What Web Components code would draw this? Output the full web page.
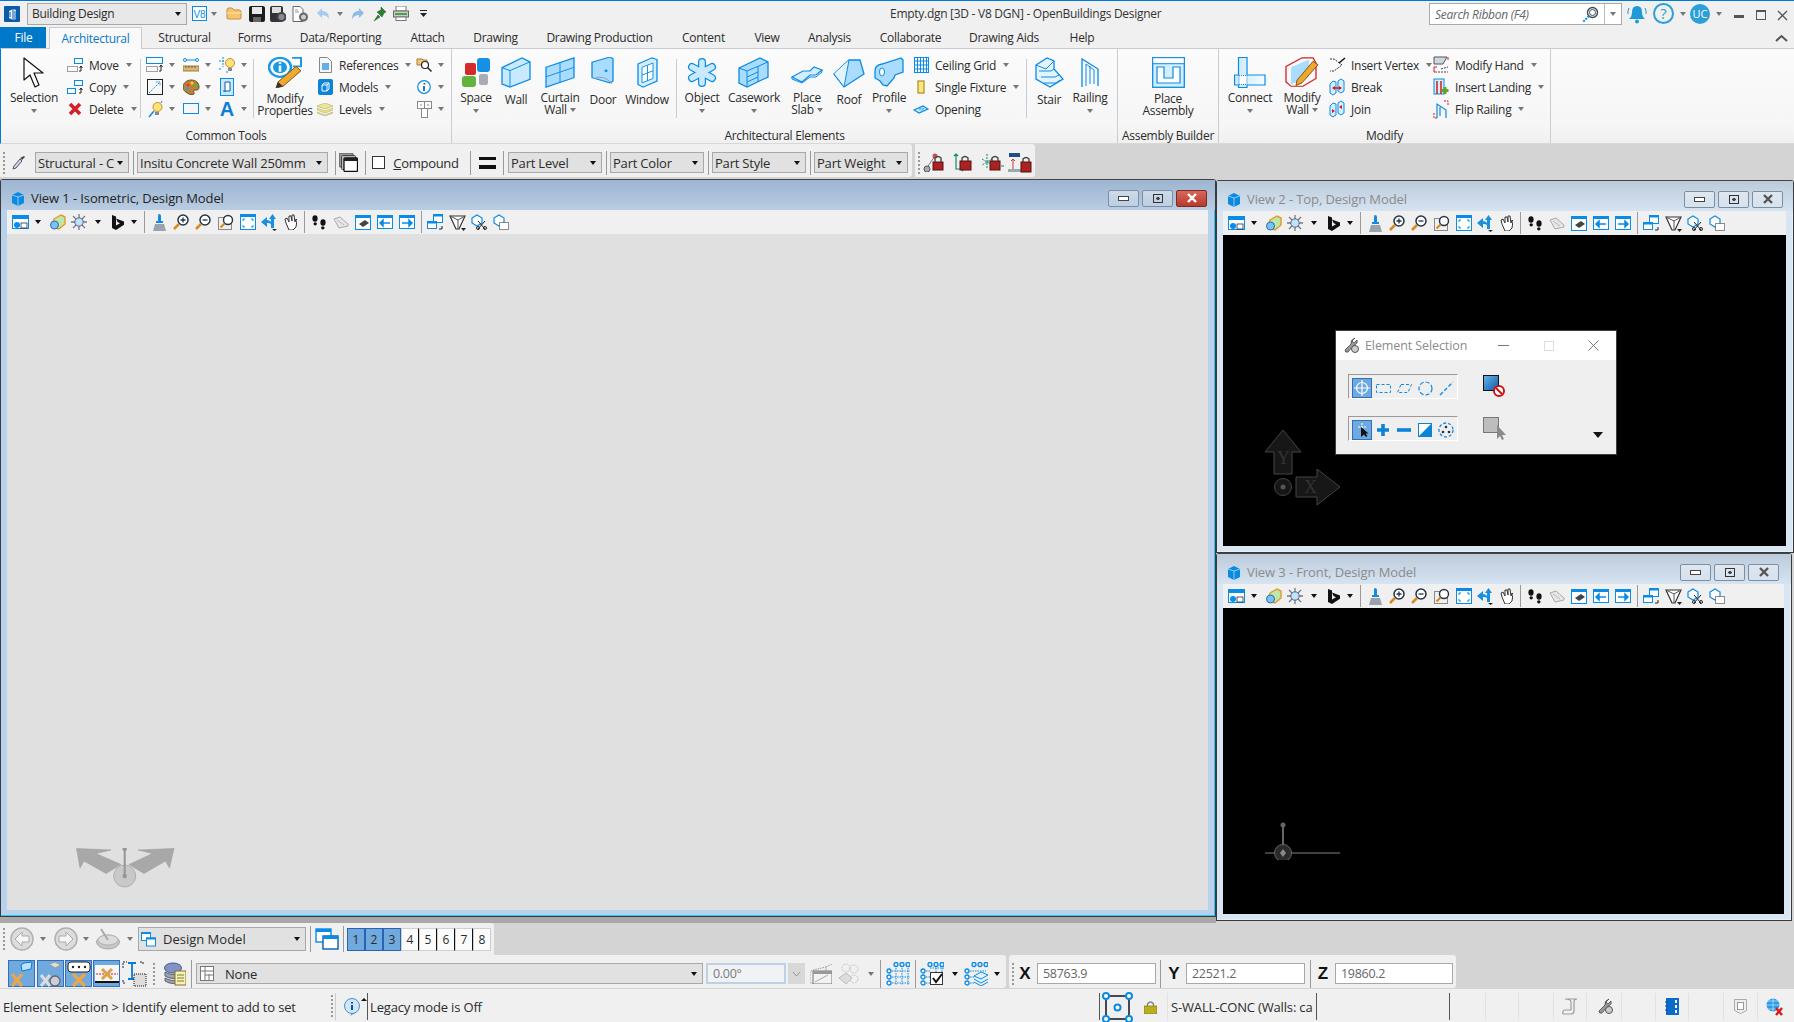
<!DOCTYPE html>
<html>
<head>
<meta charset="utf-8">
<style>
  html, body { margin: 0; padding: 0; width: 1794px; height: 1022px; overflow: hidden; background: #d4d4d4; }
  body { font-family: "Open Sans", "Liberation Sans", sans-serif; font-size: 12px; color: #2b2b2b; }
  app-shell { display: flex; flex-direction: column; width: 1794px; height: 1022px; }
</style>
</head>
<body>
<app-shell></app-shell>
<script>
const B = '#0a8be6', L = '#aadcff', G = '#8a8a8a';
const ICONS = {
  logo: [16,16,`<rect width="16" height="16" rx="1" fill="#0b5ca8"/><path d="M5 5l4-2 3 1v9l-3 1-4-2z" fill="#e6f2ff"/><path d="M9 3v11M6 6v5M11 5v8" stroke="#0b5ca8"/>`],
  v8: [15,15,`<rect x=".5" y=".5" width="14" height="14" fill="#fff" stroke="${B}"/><text x="1.5" y="12" font-size="10" font-family="Liberation Sans" fill="${B}">V8</text>`],
  folder: [16,13,`<path d="M1 3q0-2 2-2h3l2 2h5q2 0 2 2v6q0 1-1 1H2q-1 0-1-1z" fill="#f6c46c" stroke="#c58f39"/><path d="M1 6h14" stroke="#fde3a9"/>`],
  save: [16,16,`<rect width="16" height="16" rx="2" fill="#1c1c1e"/><rect x="3" y="1" width="10" height="7" fill="#e8e8e8"/><rect x="4" y="11" width="8" height="5" fill="#666"/>`],
  saveg: [16,16,`<rect width="13" height="16" rx="2" fill="#333"/><rect x="2" y="1" width="9" height="6" fill="#ddd"/><circle cx="11.5" cy="11" r="4" fill="#889" stroke="#444" stroke-width="2"/>`],
  docg: [16,16,`<path d="M1 .5h7l3 3v12H1z" fill="#fff" stroke="#666"/><path d="M3 4h3M3 6h4" stroke="#999"/><circle cx="11.5" cy="11" r="3.5" fill="#ccc" stroke="#666" stroke-width="2"/>`],
  undo: [14,13,`<path d="M1 6l5-5v3c4 0 7 2 7 8-2-3-4-4-7-4v3z" fill="#a8cbee"/>`],
  redo: [14,13,`<path d="M13 6L8 1v3C4 4 1 6 1 12c2-3 4-4 7-4v3z" fill="#8fbbe6"/>`],
  pin: [14,16,`<path d="M8 1l5 5-2 1-2 4-5-5 4-2zM5 9l-4 6 6-4z" fill="#2d7d32" stroke="#1c5a20" stroke-width=".5"/>`],
  print: [16,15,`<rect x="3" y="0" width="10" height="5" fill="#fff" stroke="#777"/><rect x=".5" y="5" width="15" height="6" fill="#ccc" stroke="#666"/><rect x="2" y="7" width="12" height="2" fill="#49a34b"/><rect x="3" y="11" width="10" height="3.5" fill="#fff" stroke="#777"/>`],
  cust: [7,8,`<path d="M0 .5h7" stroke="#222"/><path d="M0 3h7L3.5 7z" fill="#222"/>`],
  mag: [17,17,`<circle cx="10.5" cy="6.500" r="5" fill="#fff" stroke="#3a4a55" stroke-width="1.400"/><circle cx="10.500" cy="6.500" r="3" fill="none" stroke="#3a4a55"/><path d="M7 10l-6 6" stroke="#0a8be6" stroke-width="2" stroke-dasharray="2 1"/>`],
  bell: [20,20,`<path d="M10 2q5 0 5 6 0 5 3 7H2q3-2 3-7 0-6 5-6z" fill="#1f9ad6"/><circle cx="10" cy="17.500" r="2" fill="#1f9ad6"/><path d="M2 4Q.5 7 1 10M18 4q1.500 3 1 6" fill="none" stroke="#1f9ad6"/>`],
  select: [22,31,`<path d="M1 1v22l6-5 5 12 4-2-5-12h9z" fill="#fff" stroke="#111" stroke-width="1.200" stroke-linejoin="round"/>`],
  move: [17,16,`<rect x=".5" y="9.500" width="10" height="5" fill="none" stroke="#444" stroke-dasharray="1 1"/><rect x="7.500" y="1.500" width="8" height="5" fill="none" stroke="${B}"/><path d="M14 9v5h-2M14 9l-1.500 2M14 9l1.500 2" stroke="#222" fill="none"/>`],
  copy: [17,16,`<rect x=".5" y="9.500" width="8" height="5" fill="none" stroke="${B}"/><rect x="7.500" y="1.500" width="8" height="5" fill="none" stroke="${B}"/><path d="M14 9v5h-2M14 9l-1.500 2M14 9l1.500 2" stroke="#222" fill="none"/>`],
  del: [14,14,`<path d="M2 2l10 10M12 2L2 12" stroke="#d42028" stroke-width="3.600"/>`],
  g1: [18,16,`<rect x=".5" y=".5" width="16" height="6" fill="none" stroke="${B}"/><rect x=".5" y="9.500" width="11" height="5" fill="none" stroke="#444" stroke-dasharray="1 1"/><path d="M15 8v6h-2M15 8l-1.500 2M15 8l1.500 2" stroke="#222" fill="none"/>`],
  g2: [16,14,`<path d="M2 2h12" stroke="${B}"/><circle cx="2" cy="2" r="1.500" fill="#fff" stroke="${B}"/><circle cx="14" cy="2" r="1.500" fill="#fff" stroke="${B}"/><rect x="0" y="8" width="16" height="5" fill="#d8b878" stroke="#a07c3c"/><path d="M3 8v2M6 8v2M9 8v2M12 8v2" stroke="#7a5c28"/>`],
  g3: [16,17,`<path d="M4 0v10M0 4h6M0 12h3M8 14v3" stroke="${B}" stroke-dasharray="2 1"/><circle cx="11" cy="6" r="4.500" fill="#ffe27a" stroke="#b8952c"/><rect x="9" y="11" width="4" height="3" fill="#889"/>`],
  g4: [16,16,`<rect x=".5" y=".5" width="15" height="15" fill="none" stroke="#222"/><path d="M2 14l10-10M9 3h4v4" stroke="${B}" stroke-dasharray="1.500 1" fill="none"/>`],
  g5: [17,16,`<path d="M8 1c5 0 8 3 8 7s-3 3-4 3-2 1-1 3-3 2-5 1-6-3-6-7 4-7 8-7z" fill="#b8823a" stroke="#6e4a1a"/><circle cx="5" cy="6" r="1.500" fill="#e33"/><circle cx="9" cy="4" r="1.500" fill="#fc3"/><circle cx="13" cy="6" r="1.500" fill="#3c3"/><circle cx="4" cy="10" r="1.500" fill="#39e"/>`],
  g6: [14,18,`<rect x=".5" y=".5" width="13" height="17" fill="#cbe8ff" stroke="${B}"/><path d="M5 14V4h5v9H3" fill="#fff" stroke="#0a5aa6"/>`],
  g7: [15,17,`<path d="M1 16l5-6" stroke="${B}" stroke-width="1.500"/><circle cx="9.500" cy="6" r="4.500" fill="#ffe27a" stroke="#b8952c"/><rect x="7" y="11" width="4" height="3" fill="#889"/><path d="M14 0l-1 2" stroke="${B}"/>`],
  g8: [16,12,`<rect x=".5" y=".5" width="15" height="10" fill="none" stroke="${B}"/>`],
  refs: [13,16,`<path d="M.5.5h8l4 4v11H.5z" fill="#f6f6f6" stroke="#888"/><rect x="3" y="6" width="7" height="7" fill="#5fb0ea"/>`],
  models: [15,16,`<rect width="15" height="16" rx="2" fill="#0a84d6"/><path d="M4 6l2-2h5v6l-2 2H4zM4 6h5v6M9 6l2-2" fill="none" stroke="#fff"/>`],
  levels: [16,13,`<path d="M8 0l8 3-8 3-8-3zM0 5l8 3 8-3v2l-8 3-8-3zM0 9l8 3 8-3v1l-8 3-8-3z" fill="#efe68d" stroke="#a8a05a" stroke-width=".5"/>`],
  find: [16,16,`<path d="M1 2h5l1 1h4v5H1z" fill="#f2c879" stroke="#a67c2d"/><circle cx="9" cy="8" r="3.500" fill="#fff" stroke="#222" stroke-width="1.200"/><path d="M11.500 10.500l4 4" stroke="#222" stroke-width="1.500"/>`],
  info: [14,14,`<circle cx="7" cy="7" r="6.300" fill="#fff" stroke="${B}" stroke-width="1.200"/><path d="M7.500 3v1.500M7 6v5" stroke="#0a5fc0" stroke-width="1.800"/>`],
  misc: [15,17,`<rect x=".5" y=".5" width="14" height="7" fill="#fff" stroke="#888"/><path d="M7.500 .5v7M4 3v2M11 3v2" stroke="#888"/><rect x="4.500" y="7.500" width="6" height="9" fill="#fff" stroke="#888"/>`],
  modprop: [34,36,`<circle cx="12" cy="12" r="11" fill="#fff" stroke="#1a9ae6" stroke-width="2.500"/><circle cx="12" cy="12" r="7" fill="#1a9ae6"/><path d="M12 6v2M12 10v7" stroke="#fff" stroke-width="2.500"/><path d="M24 1h9v10h-8" fill="#fff" stroke="#1a9ae6" stroke-width="2"/><path d="M28 11l5 5-18 18-7 2 2-7z" fill="#f0a830" stroke="#7a4f10"/><path d="M8 36l2-7 5 5z" fill="#333"/>`],
  space: [30,30,`<rect x="4" y="6" width="11" height="12" rx="2" fill="#d62a2a"/><rect x="16" y="1" width="13" height="14" rx="3" fill="#1590e5"/><rect x="1" y="19" width="14" height="11" rx="3" fill="#62b33c"/><rect x="18" y="17" width="9" height="11" rx="2" fill="#a9adb2"/>`],
  wall: [30,32,`<path d="M1 11L21 1l8 4v18L9 31l-8-3z" fill="#c8e9ff" stroke="${B}" stroke-width="1.300"/><path d="M1 11l8 3 20-9M9 14v17" fill="none" stroke="${B}"/>`],
  curtain: [30,36,`<path d="M1 12L29 1v23L1 35z" fill="#aadcff" stroke="${B}" stroke-width="1.300"/><path d="M15 6v24M1 23l28-11" stroke="${B}"/>`],
  door: [26,36,`<path d="M2 6L20 0l3 2v26l-3 2-18-6z" fill="#aadcff" stroke="${B}" stroke-width="1.300"/><circle cx="16" cy="16" r="1.500" fill="${B}"/><path d="M4 25q10-5 18 6" fill="none" stroke="#999"/>`],
  window: [22,36,`<path d="M2 8L16 1l5 2v25L7 35l-5-3z" fill="#d3eeff" stroke="${B}" stroke-width="1.300"/><path d="M6 12l11-5v18L6 30zM6 21l11-5M11.500 10v18" fill="#fff" stroke="${B}"/>`],
  object: [30,31,`<g stroke="${B}" stroke-width="8" stroke-linecap="round"><path d="M15 5v21M5 10l20 11M25 10L5 21"/></g><g stroke="#c8e9ff" stroke-width="5.600" stroke-linecap="round"><path d="M15 5v21M5 10l20 11M25 10L5 21"/></g>`],
  casework: [32,31,`<path d="M1 11L22 1l8 4v15L9 30l-8-4z" fill="#aadcff" stroke="${B}" stroke-width="1.300"/><path d="M1 11l8 3 21-9M9 14v16M20 9v16M9 20l11-5M9 25l11-5" fill="none" stroke="${B}"/>`],
  slab: [32,31,`<g transform="translate(0 9)"><path d="M1 11L12 5h7l4-4 8 3-6 5H19l-8 7z" fill="#d3eeff" stroke="${B}" stroke-width="1.200"/><path d="M1 11v2l10 4 8-6h6l6-5V4" fill="none" stroke="${B}"/></g>`],
  roof: [32,31,`<path d="M1 17L16 3h11l4 14-20 13z" fill="#aadcff" stroke="${B}" stroke-width="1.300"/><path d="M1 17l10 13 5-27" fill="#e4f4ff" stroke="${B}"/>`],
  profile: [30,31,`<path d="M1 14Q1 8 8 7L27 1l2 2v12l-8 3-1 3-7 8-4-1-3-4-5-3z" fill="#aadcff" stroke="${B}" stroke-width="1.300"/><ellipse cx="8" cy="15" rx="2.500" ry="4" fill="#fff" stroke="${B}"/>`],
  ceil: [15,16,`<rect x=".5" y=".5" width="14" height="15" fill="none" stroke="${B}"/><path d="M3.500 0v16M6.500 0v16M9.500 0v16M12.500 0v16M0 4h15M0 8h15M0 12h15" stroke="${B}"/>`],
  fixture: [8,14,`<rect x="1" y="1" width="6" height="12" fill="#ffe87a" stroke="#a98c2a" stroke-width="1.200"/>`],
  opening: [16,9,`<path d="M1 5l9-4 5 3-9 4z" fill="#c8e9ff" stroke="${B}" stroke-width="1.200"/><path d="M6 4l3-1 2 1-3 1z" fill="#fff" stroke="${B}" stroke-width=".6"/>`],
  stair: [29,31,`<path d="M1 8L12 1l7 3v8l9 10-13 8L1 22z" fill="#e4f4ff" stroke="${B}" stroke-width="1.300"/><path d="M1 8l10 4 8-8M4 14h12l3-2M6 20h14l4-2M9 26h12l4-3" fill="none" stroke="${B}"/>`],
  railing: [20,31,`<path d="M2 30V2l16 10v17" fill="none" stroke="${B}" stroke-width="1.300"/><path d="M6 29V7l8 6v14M10 27V9" fill="none" stroke="${B}"/>`],
  assembly: [33,31,`<rect x=".7" y=".7" width="31.600" height="29.600" fill="#d3eeff" stroke="${B}" stroke-width="1.300"/><rect x=".7" y=".7" width="31.600" height="6" fill="#fff" stroke="${B}"/><path d="M5 10h7v11h9V10h7v16H5z" fill="#fff" stroke="${B}" stroke-width="1.200"/>`],
  connect: [32,31,`<defs><linearGradient id="cn" x1="0" y1="0" x2="1" y2="0"><stop offset="0" stop-color="#c8e9ff"/><stop offset="1" stop-color="#f4fbff"/></linearGradient></defs><path d="M4.500.5h8.500v17.500h18v10H13v2.500H4.500v-2.500H.5v-10h4z" fill="url(#cn)" stroke="${B}" stroke-width="1.200"/><rect x="5" y="18.500" width="8" height="9" fill="#fff" stroke="${B}" stroke-dasharray="1 1"/>`],
  modwall: [34,36,`<path d="M1 11L17 1h11l3 6v18l-13 9H6l-5-5z" fill="none" stroke="#d32020" stroke-width="1.300"/><path d="M6 12L24 3v20L6 32z" fill="#aadcff"/><path d="M28 5l5 4-16 21-6 3 1-6z" fill="#f0a830" stroke="#7a4f10"/>`],
  vertex: [17,16,`<path d="M1 2h4l8 6-8 6H1" fill="none" stroke="#333" stroke-dasharray="2 1"/><path d="M10 6l6-5" stroke="#111" stroke-width="1.500"/>`],
  brk: [16,18,`<path d="M1 6l3-3 3 1v11l-3 2-3-2zM9 3l3-2 3 2v10l-3 2-3-2z" fill="#d3eeff" stroke="${B}"/><path d="M4 10h8" stroke="#d01c1c" stroke-width="1.500"/><path d="M6 8l-3 2 3 2M10 8l3 2-3 2" fill="#d01c1c"/>`],
  join: [16,18,`<path d="M1 6l3-3 3 1v11l-3 2-3-2zM9 3l3-2 3 2v10l-3 2-3-2z" fill="#d3eeff" stroke="${B}"/><path d="M3 9l3 2-3 2zM13 5l-3 2 3 2z" fill="#d01c1c"/>`],
  hand: [16,18,`<path d="M1 1h13l-4 7H1z" fill="#cfd6dd" stroke="#555"/><path d="M1 11h3M1 11v5h3M15 1v3" stroke="#d01c1c" fill="none"/><path d="M5 16h10M8 13l7-2" stroke="#444" stroke-dasharray="2 1"/>`],
  landing: [17,18,`<rect x="1" y="1" width="10" height="15" fill="#d3eeff" stroke="${B}"/><path d="M4 3v13M8 3v13" stroke="#d01c1c" stroke-width="1.500"/><path d="M12 9v7M8.500 12.500h7" stroke="#5fa52d" stroke-width="3"/>`],
  flip: [16,19,`<path d="M4 18V4l9 6v8M7 16V7" fill="none" stroke="${B}" stroke-width="1.200"/><path d="M1 13v5h4M11 1h4v5" fill="none" stroke="#d01c1c" stroke-dasharray="2 1"/>`],
  dropper: [13,15,`<path d="M12 1l1 1-3 3-2-2z" fill="#445"/><path d="M8 4l2 2-6 7-3 1 1-3z" fill="#cfd6e6" stroke="#556"/>`],
  layers: [19,19,`<rect x="0" y="0" width="14" height="14" rx="1" fill="#999" stroke="#555"/><rect x="2.500" y="2.500" width="14" height="14" rx="1" fill="#bbb" stroke="#444"/><rect x="5" y="5" width="13.500" height="13.500" rx="1" fill="#fff" stroke="#111" stroke-width="1.300"/><rect x="5" y="5" width="13.500" height="3" fill="#222"/>`],
  lineq: [17,12,`<rect width="17" height="3" fill="#111"/><rect y="8" width="17" height="4" fill="#111"/>`],
  lk1: [23,19,`<circle cx="4" cy="16" r="3" fill="#aaa" stroke="#555"/><path d="M5 13L12 3" stroke="#777"/><circle cx="12" cy="3" r="2.500" fill="#c75050"/><rect x="10" y="9" width="10" height="8" fill="#a22" stroke="#511"/><path d="M12 9V5q3-3 6 0v4" fill="none" stroke="#444" stroke-width="1.400"/>`],
  lk2: [21,19,`<path d="M3 1v15h8M1 3l2-2 2 2M9 14l2 2-2 2" fill="none" stroke="#0b8a6a" stroke-width="1.200"/><rect x="7" y="8" width="11" height="9" fill="#a22" stroke="#511"/><path d="M9 8V5q3-3 6 0v3" fill="none" stroke="#444" stroke-width="1.400"/>`],
  lk3: [23,19,`<path d="M6 1v15M1 6l10 6M11 6L1 12" stroke="#0b8a6a" stroke-dasharray="2 1"/><rect x="9" y="8" width="10" height="9" fill="#a22" stroke="#511"/><path d="M11 8V5q3-3 6 0v3" fill="none" stroke="#444" stroke-width="1.400"/><path d="M20 13h3" stroke="#0b8a6a"/>`],
  lk4: [24,20,`<rect x="1" y="0" width="11" height="4" fill="#1e4f8a"/><path d="M5 16V6M3 8l2-2 2 2" stroke="#c33" fill="none"/><rect x="0" y="16" width="13" height="3" fill="#9aa"/><rect x="13" y="9" width="10" height="10" fill="#a22" stroke="#511"/><path d="M15 9V6q3-3 6 0v3" fill="none" stroke="#444" stroke-width="1.400"/>`],
  cube: [15,15,`<path d="M2 4l6-3 6 3v8l-6 3-6-3z" fill="#0c8ae0"/><path d="M2 4l6 2 6-2M8 6v9" stroke="#bfe4ff" fill="none" stroke-width=".7"/>`],
  v_view: [17,15,`<rect x=".5" y=".5" width="16" height="13" fill="#fff" stroke="${B}"/><rect width="17" height="4" fill="${B}"/><circle cx="5" cy="10" r="3" fill="${B}"/><rect x="9" y="8" width="6" height="5" fill="#fff" stroke="#234" stroke-width=".8"/>`],
  v_pal: [17,17,`<path d="M5 5l7-4 4 2v7l-6 5-7-2z" fill="#bde8a8" stroke="#e59a2a" stroke-width="1.400"/><circle cx="5.500" cy="11" r="4" fill="#7cc3f5" stroke="#2b6cb0"/>`],
  v_sun: [16,16,`<g stroke="#778" stroke-width="1.300"><path d="M8 0v16M0 8h16M2 2l12 12M14 2L2 14"/></g><circle cx="8" cy="8" r="4.200" fill="#bfe3ff" stroke="#567"/>`],
  v_bing: [14,15,`<path d="M1 0l4 1.500v9l4-2.200L6.500 7 5 3.500l8 3v3.200L5 15l-4-2z" fill="#111"/>`],
  v_brush: [13,17,`<path d="M6 0q2 0 2 2v5H5V2q0-2 1-2z" fill="#1789de"/><rect x="3" y="7" width="7" height="2" fill="#1789de"/><path d="M2 10h9l2 7H0z" fill="#9aa3ad"/>`],
  v_zin: [16,16,`<circle cx="10" cy="6" r="5" fill="#fff" stroke="#234" stroke-width="1.500"/><path d="M7.500 6h5M10 3.500v5" stroke="#234" stroke-width="1.300"/><path d="M6 10l-5 5" stroke="#d98a1e" stroke-width="2.500"/>`],
  v_zout: [16,16,`<circle cx="10" cy="6" r="5" fill="#fff" stroke="#234" stroke-width="1.500"/><path d="M7.500 6h5" stroke="#234" stroke-width="1.300"/><path d="M6 10l-5 5" stroke="#d98a1e" stroke-width="2.500"/>`],
  v_wz: [16,16,`<rect x=".5" y="3.500" width="13" height="12" fill="none" stroke="#222" stroke-dasharray="1 1"/><circle cx="10" cy="6" r="4.500" fill="#fff" stroke="#234" stroke-width="1.400"/><path d="M6.500 9.500l-4 4" stroke="#d98a1e" stroke-width="2.200"/>`],
  v_fit: [16,16,`<rect x=".5" y=".5" width="15" height="15" fill="#fff" stroke="${B}"/><rect width="16" height="3" fill="${B}"/><path d="M3 5h2M3 5v2M13 5h-2M13 5v2M3 13h2M3 13v-2M13 13h-2M13 13v-2" stroke="${B}"/>`],
  v_rot: [18,18,`<path d="M1 9l6-5v3c2 0 3 1 4 2V6H9l3.500-5L16 6h-2v9h-3v-4c-1-1-2-1-4-1v4z" fill="#1a8fe0"/><path d="M12 16l2.500 2 2.500-2z" fill="#222"/>`],
  v_pan: [14,16,`<path d="M3 9L2 5l2-1 2 4V2h2l1 5V1h2l1 7 1-3 1 1-1 7-3 3H6z" fill="#fff" stroke="#333"/>`],
  v_feet: [16,16,`<ellipse cx="4" cy="4.500" rx="2.600" ry="3.200" fill="#111"/><ellipse cx="4.200" cy="9.800" rx="1.700" ry="1.600" fill="#111"/><ellipse cx="12" cy="8.500" rx="2.600" ry="3.200" fill="#111"/><ellipse cx="11.800" cy="13.800" rx="1.700" ry="1.600" fill="#111"/>`],
  v_shoe: [16,13,`<path d="M1 3l6-2 8 7v2l-9 2z" fill="#e6e6e6" stroke="#aaa"/><path d="M4 4l7 5" stroke="#bbb"/>`],
  v_hist: [16,15,`<rect x=".5" y=".5" width="15" height="14" fill="#fff" stroke="${B}"/><rect width="16" height="3" fill="${B}"/><path d="M4 9l6-4 4 3-6 4z" fill="#444"/>`],
  v_prev: [16,14,`<rect width="16" height="14" fill="${B}"/><rect x="1" y="3" width="14" height="10" fill="#fff"/><path d="M3 8h10M3 8l3-3v6z" stroke="${B}" stroke-width="1.500" fill="${B}"/>`],
  v_next: [16,14,`<rect width="16" height="14" fill="${B}"/><rect x="1" y="3" width="14" height="10" fill="#fff"/><path d="M3 8h10M13 8l-3-3v6z" stroke="${B}" stroke-width="1.500" fill="${B}"/>`],
  v_copy: [16,16,`<rect x="6.500" y=".5" width="9" height="8" fill="#fff" stroke="${B}"/><rect x=".5" y="7.500" width="9" height="7" fill="#fff" stroke="${B}"/><rect x="6" y="0" width="10" height="2.500" fill="${B}"/><rect x="0" y="7" width="10" height="2.500" fill="${B}"/><path d="M15 12v3h-3" stroke="#222" fill="none"/>`],
  v_cone: [17,17,`<path d="M1 2h15l-6 13H7z" fill="#fff" stroke="#333" stroke-width="1.200"/><path d="M1 2l8 4 7-4M9 6v9" stroke="#555" fill="none"/><path d="M12 14h5l-2.500 3z" fill="#222"/>`],
  v_clip: [17,16,`<path d="M1 4l5-3 5 3v5l-5 3-5-3z" fill="#fff" stroke="${B}" stroke-width="1.200"/><path d="M7 7l7 8M14 7l-7 8" stroke="#222"/><circle cx="7" cy="14" r="1.500" fill="none" stroke="#222"/><circle cx="14" cy="14" r="1.500" fill="none" stroke="#222"/>`],
  v_clip2: [16,16,`<path d="M1 4l5-3 5 3v5l-5 3-5-3z" fill="#fff" stroke="${B}" stroke-width="1.200"/><rect x="6.500" y="8.500" width="9" height="7" fill="#fff" stroke="#222" stroke-dasharray="1 1"/>`],
  tool: [17,17,`<path d="M12 1l-3 3 2 2 3-3q1 4-3 5L5 15q-3 1-3-2l6-6q-1-4 4-6z" fill="#999" stroke="#444" stroke-width=".8"/><circle cx="12" cy="12" r="3.500" fill="#ccc" stroke="#555"/>`],
  es_ident: [16,16,`<circle cx="8" cy="8" r="5.500" fill="none" stroke="#fff" stroke-width="1.200"/><path d="M8 0v16M0 8h16" stroke="#fff" stroke-width="1.200"/>`],
  es_rect: [15,9,`<rect x=".5" y=".5" width="14" height="8" fill="none" stroke="${B}" stroke-dasharray="3 2"/>`],
  es_poly: [15,9,`<path d="M4 .5h10.500L11 8.500H.5z" fill="none" stroke="${B}" stroke-dasharray="3 2"/>`],
  es_circ: [15,15,`<circle cx="7.500" cy="7.500" r="6.500" fill="none" stroke="${B}" stroke-dasharray="4 2" stroke-width="1.200"/>`],
  es_line: [15,15,`<path d="M1 14L14 1" stroke="${B}" stroke-width="1.300" stroke-dasharray="4 2"/>`],
  es_new: [13,14,`<g stroke="#fff" stroke-width="1.100" stroke-dasharray="2 1"><path d="M6 0v8M2 4h8"/></g><path d="M5 4v10l3-2.500 2 2.500 1.500-1-2-2.500h3z" fill="#111"/>`],
  es_add: [14,14,`<path d="M7 1v12M1 7h12" stroke="#0a84d6" stroke-width="3.600"/>`],
  es_sub: [14,4,`<path d="M0 2h14" stroke="#0a84d6" stroke-width="3.600"/>`],
  es_inv: [14,14,`<rect x=".5" y=".5" width="13" height="13" fill="#fff" stroke="#0a84d6"/><path d="M13.500.5v13H.5z" fill="#0a84d6"/>`],
  es_all: [16,16,`<circle cx="8" cy="8" r="7" fill="none" stroke="${B}" stroke-dasharray="3 2" stroke-width="1.300"/><circle cx="8" cy="5" r="1.300" fill="#333"/><circle cx="5" cy="10" r="1.300" fill="#333"/><circle cx="11" cy="10" r="1.300" fill="#333"/>`],
  es_no: [23,23,`<defs><linearGradient id="e1" x1="0" y1="0" x2="1" y2="1"><stop offset="0" stop-color="#6bb4e8"/><stop offset="1" stop-color="#0b5ca8"/></linearGradient></defs><rect x=".5" y=".5" width="15" height="15" fill="url(#e1)" stroke="#111"/><circle cx="16" cy="16" r="5" fill="#fff" stroke="#c81414" stroke-width="2"/><path d="M13 13l6 6" stroke="#c81414" stroke-width="2"/>`],
  es_pick: [23,23,`<rect x=".5" y=".5" width="15" height="15" fill="#bdbdbd" stroke="#777"/><path d="M14 8v14l3-3 2 4 2-1-2-4h4z" fill="#8a8a8a"/>`],
  tr_iso: [100,40,`<g fill="#a8a8a8" stroke="#a0a0a0" stroke-width=".6"><path d="M.5.5L35 2 20 5.500l25 11-15 9-22-12.500-4 7z"/><path d="M98 .5L62 2l14.500 3.500L53 16.500l15 9 21.500-12.500 4 7z"/></g><circle cx="48.700" cy="28" r="11" fill="#c8c8c8" stroke="#b0b0b0"/><path d="M48.700 0v28" stroke="#959595" stroke-width="2"/><circle cx="48.700" cy="1" r="2.200" fill="#959595"/><circle cx="48.700" cy="28" r="2.200" fill="#959595"/>`],
  tr_top: [80,76,`<path d="M21 0l18 22h-9v22H12V22H3z" fill="#171717" stroke="#444"/><text x="15" y="34" font-size="18" font-family="Liberation Serif" fill="#333">Y</text><circle cx="21" cy="57" r="8.500" fill="#161616" stroke="#444"/><circle cx="21" cy="57" r="2.500" fill="#555"/><path d="M34 47h21V39l23 18-23 18v-8H34z" fill="#171717" stroke="#444"/><text x="42" y="63" font-size="18" font-family="Liberation Serif" fill="#333">X</text>`],
  tr_front: [80,40,`<path d="M3 33h75" stroke="#808080"/><path d="M21 5v28" stroke="#666" stroke-width="2"/><circle cx="21" cy="5" r="2.500" fill="#666"/><circle cx="21" cy="33" r="8.500" fill="#2a2a2a" stroke="#666"/><path d="M21 29l3 4-3 4-3-4z" fill="#888"/>`],
  back: [24,24,`<circle cx="12" cy="12" r="11" fill="#dcdcdc" stroke="#b0b0b0" stroke-width="1.500"/><path d="M5 12l7-7v4h7v6h-7v4z" fill="#f6f6f6" stroke="#aaa"/>`],
  fwd: [24,24,`<circle cx="12" cy="12" r="11" fill="#dcdcdc" stroke="#b0b0b0" stroke-width="1.500"/><path d="M19 12l-7-7v4H5v6h7v4z" fill="#f6f6f6" stroke="#aaa"/>`],
  sundial: [24,22,`<ellipse cx="12" cy="14" rx="11.500" ry="7" fill="#c6c6c6" stroke="#aaa"/><ellipse cx="12" cy="12" rx="10" ry="5" fill="#dcdcdc" stroke="#b4b4b4"/><path d="M5 1l7 11" stroke="#aaa" stroke-width="2"/>`],
  dm: [15,15,`<rect x=".5" y=".5" width="9" height="8" fill="#fff" stroke="${B}"/><rect x="5.500" y="6" width="9" height="8" fill="#fff" stroke="${B}"/><rect x="0" y="0" width="10" height="2" fill="${B}"/><rect x="5" y="5.500" width="10" height="2" fill="${B}"/>`],
  views: [24,22,`<rect x="1" y="1" width="15" height="13" fill="#fff" stroke="${B}" stroke-width="1.400"/><rect x="1" y="1" width="15" height="3" fill="${B}"/><rect x="8" y="8" width="15" height="13" fill="#fff" stroke="#0a5ea8" stroke-width="1.400"/><rect x="8" y="8" width="15" height="3" fill="${B}"/>`],
  at1: [24,26,`<path d="M14 2l8-1-1 7-9 2-1-6z" fill="#bde2ff" stroke="#0a7bd0"/><path d="M2 25L12 13M2 13l10 12" stroke="#e9a64a" stroke-width="3.400"/>`],
  at2: [24,26,`<path d="M10 3l6-2 6 3-6 3z" fill="#ddd" stroke="#999"/><path d="M2 25l9-11M2 14l9 11" stroke="#ddd" stroke-width="3"/><circle cx="16" cy="20" r="5" fill="#ccd" stroke="#666" stroke-width="1.300"/>`],
  at3: [24,26,`<rect x="1" y="1" width="22" height="10" rx="3" fill="#fff" stroke="#222"/><circle cx="6" cy="6" r="1.200" fill="#222"/><circle cx="12" cy="6" r="1.200" fill="#222"/><circle cx="18" cy="6" r="1.200" fill="#222"/><path d="M6 25l12-12M6 13l12 12" stroke="#e9a64a" stroke-width="3.400"/>`],
  at4: [24,18,`<rect x="0" y="0" width="24" height="18" fill="#f6f6f6"/><rect y="16" width="24" height="2" fill="#111"/><path d="M1 9h22" stroke="#d01c1c" stroke-dasharray="2 1"/><path d="M7 4l10 10M17 4L7 14" stroke="#e0a04a" stroke-width="3"/>`],
  at5: [25,26,`<path d="M1 7V1h4M1 19v3h3M18 1h3v3" fill="none" stroke="#222" stroke-dasharray="2 1"/><path d="M6 2h8M6 18h8M10 2v16" stroke="#0a7bd0" stroke-width="1.800"/><rect x="12" y="13" width="12" height="12" fill="#ddd" stroke="#111" stroke-dasharray="1 1"/>`],
  stack: [22,24,`<ellipse cx="9" cy="6" rx="8.500" ry="5" fill="#7f93c8" stroke="#4c5a86"/><path d="M1 10q8 5 16 0v4q-8 5-16 0zM1 16q8 5 16 0v3q-8 5-16 0z" fill="#9ea4b3" stroke="#5c6270"/><rect x="11" y="9" width="11" height="14" fill="#ffefb0" stroke="#807030"/><path d="M13 13h7M13 16h7M13 19h7" stroke="#5a8a3c"/>`],
  level: [14,15,`<rect x=".5" y=".5" width="13" height="14" fill="#fff" stroke="#777"/><path d="M5 .5v14M.5 5h13M9 8v6M5 9h8" stroke="#777"/>`],
  sn1: [22,20,`<path d="M0 8v11h16V3l-13 3zM16 3l6-3" fill="none" stroke="#999" stroke-dasharray="1.500 1"/><rect x="3" y="7" width="19" height="13" fill="#f2f2f2" stroke="#777"/><rect x="3" y="7" width="19" height="3" fill="#999"/><path d="M5 18l13-7" stroke="#aaa"/>`],
  sn2: [22,24,`<g fill="none" stroke="#c8c8c8" stroke-dasharray="2 1"><circle cx="8" cy="6" r="4"/><circle cx="16" cy="7" r="4"/><circle cx="16" cy="17" r="4"/></g><path d="M1 16l7-5 6 5-6 6z" fill="#ddd" stroke="#bbb"/>`],
  grid: [24,24,`<g fill="none" stroke="${B}" stroke-width="1.300"><circle cx="10" cy="2.500" r="2"/><circle cx="16" cy="2.500" r="2"/><circle cx="22" cy="2.500" r="2"/><circle cx="3" cy="9" r="2"/><circle cx="3" cy="15" r="2"/><circle cx="3" cy="21" r="2"/></g><path d="M6 9h18M6 15h18M6 21h18M10 6v17M16 6v17M22 6v17" stroke="${B}" stroke-dasharray="1.500 1"/>`],
  gridc: [24,24,`<g fill="none" stroke="${B}" stroke-width="1.300"><circle cx="10" cy="2.500" r="2"/><circle cx="16" cy="2.500" r="2"/><circle cx="22" cy="2.500" r="2"/><circle cx="3" cy="9" r="2"/><circle cx="3" cy="15" r="2"/><circle cx="3" cy="21" r="2"/></g><path d="M6 9h4M6 15h4M6 21h4M10 6h14M16 6v4M22 6v4" stroke="${B}" stroke-dasharray="1.500 1"/><rect x="10.500" y="10.500" width="12" height="12" fill="#fff" stroke="#333"/><path d="M13 16l3 4 6-8" fill="none" stroke="#111" stroke-width="2"/>`],
  grids: [24,24,`<g fill="none" stroke="${B}" stroke-width="1.300"><circle cx="10" cy="2.500" r="2"/><circle cx="16" cy="2.500" r="2"/><circle cx="22" cy="2.500" r="2"/><circle cx="3" cy="9" r="2"/><circle cx="3" cy="15" r="2"/><circle cx="3" cy="21" r="2"/></g><path d="M6 9h16M6 15h4M6 21h4" stroke="${B}" stroke-dasharray="1.500 1"/><path d="M10 14l7-4 7 3-7 4zM10 17l7 4 7-4M10 20l7 4 7-4" fill="#dff1ff" stroke="${B}"/>`],
  infob: [16,18,`<circle cx="8" cy="8" r="7.500" fill="#cfe6fb" stroke="#4a8fd0"/><path d="M8 4v1.500M8 7v5" stroke="#0b4fa0" stroke-width="2"/><path d="M8 15l-2 3 5-3z" fill="#4a8fd0"/>`],
  box: [31,30,`<rect x="4" y="4" width="23" height="23" fill="none" stroke="#444a55" stroke-width="2"/><g fill="#fff" stroke="${B}" stroke-width="2"><circle cx="4" cy="4" r="3"/><circle cx="27" cy="4" r="3"/><circle cx="4" cy="27" r="3"/><circle cx="27" cy="27" r="3"/><circle cx="15.500" cy="15.500" r="3"/></g>`],
  lock: [13,14,`<path d="M3.500 6V4q3-4 6 0v2" fill="none" stroke="#888" stroke-width="1.400"/><rect y="6" width="13" height="8" fill="#b8b020" stroke="#77700c" stroke-width=".6"/>`],
  scroll: [16,17,`<path d="M3 1h12q-3 0-3 3v9q0 3-3 3H2q-2 0-1-2 0-2 2-2h6V4q0-3-6-3z" fill="#f2f2f2" stroke="#9a9a9a" stroke-width="1.200"/>`],
  note: [14,17,`<rect x="1" width="13" height="17" fill="#0a6cc8"/><rect x="10" y="2" width="2" height="3" fill="#fff"/><rect x="10" y="7" width="2" height="3" fill="#fff"/><rect x="10" y="12" width="2" height="3" fill="#fff"/><path d="M0 4h3M0 8h3M0 12h3" stroke="#0a4f92"/>`],
  doc3: [13,15,`<path d="M.5.5h12v11l-6 3-6-3z" fill="#eee" stroke="#aaa"/><rect x="3.500" y="3.500" width="6" height="7" fill="#fff" stroke="#999"/>`],
  globe: [17,18,`<circle cx="7" cy="7" r="6.500" fill="#2a9ae6"/><path d="M0 7h14M7 0v14M2 3h10M2 11h10" stroke="#cfeaff" stroke-width=".7"/><path d="M10 10l6 7M16 10l-6 7" stroke="#d41c1c" stroke-width="2.400"/>`]
};

class UiIcon extends HTMLElement {
  connectedCallback() {
    const [w, h, body] = ICONS[this.getAttribute('name')];
    const fit = this.getAttribute('fit');
    const hh = fit && h > +fit ? +fit : h;
    this.attachShadow({ mode: 'open' }).innerHTML = `
      <style>:host { display: inline-flex; flex: none; line-height: 0; }</style>
      <svg width="${w}" height="${hh}" viewBox="0 0 ${w} ${h}" preserveAspectRatio="none" xmlns="http://www.w3.org/2000/svg">${body}</svg>`;
  }
}
customElements.define('ui-icon', UiIcon);

const ic = n => `<ui-icon name="${n}"></ui-icon>`;
const TEXT = `font-family: "Open Sans", "Liberation Sans", sans-serif; font-size: 12px; letter-spacing: -.28px;`;
const BASE = `
  :host { ${TEXT} color: #2b2b2b; }
  .strip { display: flex; align-items: center; }
  .c { display: flex; flex: none; align-items: center; justify-content: center; white-space: nowrap; }
  .tri { display: block; width: 0; height: 0; border: 3.500px solid transparent; border-top: 4px solid #777; border-bottom: 0; }
  .tri.k { border-top-color: #111; }
  .sep { display: block; width: 1px; height: 24px; background: #9a9a9a; }
  .grip { display: block; width: 2px; height: 22px; background: repeating-linear-gradient(#999 0 2px, transparent 2px 4px); }
`;
const tri = '<i class="tri"></i>', trik = '<i class="tri k"></i>';
const sep = '<i class="sep"></i>', grip = '<i class="grip"></i>';
// items are [left x, width, html]; the gaps become margins so it all stays in flow
function strip(start, items) {
  let p = start;
  return items.map(([x, w, h]) => {
    const s = `<span class="c" style="margin-left:${x - p}px;width:${w}px">${h}</span>`;
    p = x + w;
    return s;
  }).join('');
}

class UiCombo extends HTMLElement {
  connectedCallback() {
    const w = this.getAttribute('w'), ic0 = this.getAttribute('icon'), pl = this.getAttribute('pad') || 2;
    this.attachShadow({ mode: 'open' }).innerHTML = `
      <style>${BASE}
        :host { display: flex; box-sizing: border-box; width: ${w}px; height: ${this.getAttribute('h') || 21}px; flex: none; font-size: 13px; letter-spacing: -.2px;
                align-items: center; background: #e1e1e1; border: 1px solid #a8a8a8; padding-left: ${pl}px; }
        span { flex: 1; overflow: hidden; white-space: nowrap; }
        ui-icon { margin-right: ${this.getAttribute('ig') || 6}px; }
        .tri { margin: 0 5px 0 3px; flex: none; }
        :host([light]) { background: #e8e8e8; }
      </style>
      ${ic0 ? ic(ic0) : ''}<span>${this.getAttribute('label')}</span>${trik}`;
  }
}
customElements.define('ui-combo', UiCombo);

class AppTitlebar extends HTMLElement {
  connectedCallback() {
    this.attachShadow({ mode: 'open' }).innerHTML = `
      <style>${BASE}
        :host { display: flex; align-items: flex-start; height: 26px; flex: none; background: #f0f0f0; border-top: 1px solid #0078d4; box-sizing: content-box; }
        .strip { height: 25px; }
        .title { margin-left: 0; color: #333; line-height: 26px; white-space: nowrap; }
        .search { display: flex; align-items: center; box-sizing: border-box; width: 193px; height: 22px; margin-top: 2px; margin-left: auto;
                  background: #fff; border: 1px solid #a9a9a9; font-style: italic; color: #666; padding-left: 5px; flex: none; }
        .search span { flex: 1; }
        .drop { display: flex; width: 16px; height: 20px; border-left: 1px solid #bbb; align-items: center; justify-content: center; margin-left: 5px; }
        .help { box-sizing: border-box; width: 21px; height: 21px; border: 2px solid #2b9fd8; border-radius: 50%; color: #2b9fd8; font-size: 15px; text-align: center; line-height: 17px; letter-spacing: 0; }
        .uc { box-sizing: border-box; width: 20px; height: 20px; background: #2b9fd8; border-radius: 50%; color: #fff; font-size: 11px; text-align: center; line-height: 20px; letter-spacing: 0; }
        .min { width: 10px; height: 3px; background: #555; margin-top: 6px; }
        .max { box-sizing: border-box; width: 10px; height: 10px; border: 1px solid #555; border-top-width: 2px; margin-top: 3px; }
        .close { width: 11px; height: 11px; margin-top: 3px; }
      </style>
      <div class="strip" style="width:890px;flex:none">${strip(0, [
        [4,16,ic('logo')],
        [27,160,`<ui-combo w="160" h="22" pad="4" label="Building Design" light style="font-size:12px;letter-spacing:-.28px"></ui-combo>`],
        [192,15,ic('v8')],[209,9,tri],[226,16,ic('folder')],[249,16,ic('save')],[270,16,ic('saveg')],
        [292,16,ic('docg')],[316,14,ic('undo')],[335,9,tri],[351,14,ic('redo')],[373,14,ic('pin')],
        [393,16,ic('print')],[419,8,ic('cust')]
      ])}</div>
      <span class="title">Empty.dgn [3D - V8 DGN] - OpenBuildings Designer</span>
      <div class="search"><span>Search Ribbon (F4)</span>${ic('mag')}<i class="drop">${tri}</i></div>
      <div class="strip" style="flex:none;width:172px">${strip(1622, [
        [1627,20,ic('bell')],[1653,21,'<span class="help">?</span>'],[1678,9,tri],[1690,20,'<span class="uc">UC</span>'],
        [1714,9,tri],[1734,10,'<i class="min"></i>'],[1756,10,'<i class="max"></i>'],
        [1777,11,'<svg class="close" viewBox="0 0 11 11"><path d="M1 1l9 9M10 1l-9 9" stroke="#555" stroke-width="1.300"/></svg>']
      ])}</div>`;
  }
}
customElements.define('app-titlebar', AppTitlebar);

class RibbonTabs extends HTMLElement {
  connectedCallback() {
    const tabs = [['Architectural',93],['Structural',85],['Forms',55],['Data/Reporting',117],['Attach',57],
      ['Drawing',79],['Drawing Production',129],['Content',79],['View',48],['Analysis',77],
      ['Collaborate',85],['Drawing Aids',102],['Help',54]];
    this.attachShadow({ mode: 'open' }).innerHTML = `
      <style>${BASE}
        :host { display: flex; height: 22px; flex: none; background: #f0f0f0; box-sizing: border-box; border-bottom: 1px solid #c8ccd2; position: relative; border-left: 1px solid #0078d4; }
        .file { width: 45px; background: #0078c8; color: #fff; text-align: center; line-height: 21px; height: 21px; flex: none; }
        a { display: block; text-align: center; line-height: 22px; flex: none; color: #2b2b2b; }
        a.on { background: #f9f9f9; border: 1px solid #c8ccd2; border-bottom: 0; color: #0a78c8; height: 22px; box-sizing: border-box; line-height: 21px; z-index: 1; }
        svg { margin-left: auto; margin: 7px 6px 0 auto; }
      </style>
      <div class="file">File</div>
      ${tabs.map(([t, w], i) => `<a class="${i ? '' : 'on'}" style="width:${w}px;margin-left:${i ? 0 : 3}px">${t}</a>`).join('')}
      <svg width="13" height="8" viewBox="0 0 13 8"><path d="M1 7l5.500-5 5.500 5" fill="none" stroke="#555" stroke-width="2"/></svg>`;
  }
}
customElements.define('ribbon-tabs', RibbonTabs);

class RibbonGroup extends HTMLElement {
  connectedCallback() {
    this.attachShadow({ mode: 'open' }).innerHTML = `
      <style>${BASE}
        :host { display: flex; flex-direction: column; flex: none; box-sizing: border-box; width: ${this.getAttribute('w')}px; border-right: 1px solid #c9ccd2; height: 94px; }
        .body { display: flex; height: 80px; }
        .name { text-align: center; height: 14px; line-height: 14px; }
      </style>
      <div class="body"><slot></slot></div>
      <div class="name">${this.getAttribute('name')}</div>`;
  }
}
customElements.define('ribbon-group', RibbonGroup);

class RibbonBig extends HTMLElement {
  connectedCallback() {
    const a = n => this.getAttribute(n);
    const top = a('top') || 0, arrow = a('arrow');
    this.attachShadow({ mode: 'open' }).innerHTML = `
      <style>${BASE}
        :host { display: flex; flex-direction: column; align-items: center; flex: none; width: ${a('w')}px; line-height: 12px; }
        .i { display: flex; height: 35px; margin-top: 8px; align-items: flex-start; justify-content: center; width: 100%; }
        .l { margin-top: ${top}px; white-space: nowrap; text-align: center; }
        .l .tri { display: inline-block; margin-left: 3px; vertical-align: 2px; }
        .d { margin-top: 5px; }
      </style>
      <div class="i"><ui-icon name="${a('icon')}" fit="31"></ui-icon></div>
      <div class="l">${a('label')}${a('l2') ? `<br>${a('l2')}${arrow === 'in' ? tri : ''}` : ''}</div>
      ${arrow === 'below' ? `<div class="d">${tri}</div>` : ''}`;
  }
}
customElements.define('ribbon-big', RibbonBig);

class RibbonItem extends HTMLElement {
  connectedCallback() {
    const a = n => this.getAttribute(n);
    const label = a('label'), glyph = a('glyph');
    this.attachShadow({ mode: 'open' }).innerHTML = `
      <style>${BASE}
        :host { display: flex; align-items: center; height: 22px; white-space: nowrap; flex: none; }
        .i { display: flex; width: ${label ? 16 : 18}px; justify-content: center; flex: none; }
        .t { margin-left: 6px; }
        .tri { margin-left: ${label ? 7 : 5}px; }
        .g { font: 700 20px/20px "Liberation Sans", sans-serif; color: #0a7fd6; letter-spacing: 0; }
      </style>
      <div class="i">${glyph ? `<span class="g">${glyph}</span>` : ic(a('icon'))}</div>
      ${label ? `<div class="t">${label}</div>` : ''}
      ${this.hasAttribute('noarrow') ? '' : tri}`;
  }
}
customElements.define('ribbon-item', RibbonItem);

class RibbonBar extends HTMLElement {
  connectedCallback() {
    const cell = n => `<ribbon-item icon="${n}"></ribbon-item>`;
    const big = (w, icon, label, extra = '') => `<ribbon-big w="${w}" icon="${icon}" label="${label}" ${extra}></ribbon-big>`;
    this.attachShadow({ mode: 'open' }).innerHTML = `
      <style>${BASE}
        :host { display: flex; height: 95px; flex: none; box-sizing: border-box; border-left: 1px solid #0078d4;
                background: linear-gradient(#fbfbfb, #f6f6f6 80%, #f0f0f0); border-bottom: 1px solid #d8d8d8; }
        .sep { height: 59px; margin-top: 10px; background: #c9ccd2; flex: none; }
        .col { display: flex; flex-direction: column; flex: none; padding-top: 5px; }
        .grid { display: grid; grid-template-columns: 36px 36px 35px; grid-auto-rows: 22px; flex: none; padding-top: 5px; margin-left: 5px; }
      </style>
      <ribbon-group w="451" name="Common Tools">
        ${big(62, 'select', 'Selection', 'arrow="below" style="margin-left:2px"')}
        <div class="col" style="width:73px;margin-left:2px">
          <ribbon-item icon="move" label="Move"></ribbon-item>
          <ribbon-item icon="copy" label="Copy"></ribbon-item>
          <ribbon-item icon="del" label="Delete"></ribbon-item>
        </div>
        <i class="sep"></i>
        <div class="grid">${['g1','g2','g3','g4','g5','g6','g7','g8'].map(cell).join('')}<ribbon-item glyph="A"></ribbon-item></div>
        <i class="sep"></i>
        ${big(62, 'modprop', 'Modify', 'l2="Properties" top="1"')}
        <div class="col" style="width:98px;margin-left:1px">
          <ribbon-item icon="refs" label="References"></ribbon-item>
          <ribbon-item icon="models" label="Models"></ribbon-item>
          <ribbon-item icon="levels" label="Levels"></ribbon-item>
        </div>
        <div class="col" style="width:37px">${cell('find')}${cell('info')}${cell('misc')}</div>
      </ribbon-group>
      <ribbon-group w="666" name="Architectural Elements">
        ${big(40, 'space', 'Space', 'arrow="below" style="margin-left:4px"')}
        ${big(40, 'wall', 'Wall', 'top="2"')}
        ${big(48, 'curtain', 'Curtain', 'l2="Wall" arrow="in"')}
        ${big(38, 'door', 'Door', 'top="2"')}
        ${big(50, 'window', 'Window', 'top="2"')}
        <i class="sep" style="margin-left:4px"></i>
        ${big(50, 'object', 'Object', 'arrow="below"')}
        ${big(54, 'casework', 'Casework', 'arrow="below"')}
        ${big(52, 'slab', 'Place', 'l2="Slab" arrow="in"')}
        ${big(32, 'roof', 'Roof', 'top="2"')}
        ${big(48, 'profile', 'Profile', 'arrow="below"')}
        <div class="col" style="width:113px">
          <ribbon-item icon="ceil" label="Ceiling Grid"></ribbon-item>
          <ribbon-item icon="fixture" label="Single Fixture"></ribbon-item>
          <ribbon-item icon="opening" label="Opening" noarrow></ribbon-item>
        </div>
        <i class="sep"></i>
        ${big(44, 'stair', 'Stair', 'top="2"')}
        ${big(38, 'railing', 'Railing', 'arrow="below"')}
      </ribbon-group>
      <ribbon-group w="101" name="Assembly Builder">
        ${big(100, 'assembly', 'Place', 'l2="Assembly" top="1"')}
      </ribbon-group>
      <ribbon-group w="332" name="Modify">
        ${big(50, 'connect', 'Connect', 'arrow="below" style="margin-left:6px"')}
        ${big(54, 'modwall', 'Modify', 'l2="Wall" arrow="in"')}
        <div class="col" style="width:104px">
          <ribbon-item icon="vertex" label="Insert Vertex"></ribbon-item>
          <ribbon-item icon="brk" label="Break" noarrow></ribbon-item>
          <ribbon-item icon="join" label="Join" noarrow></ribbon-item>
        </div>
        <div class="col">
          <ribbon-item icon="hand" label="Modify Hand"></ribbon-item>
          <ribbon-item icon="landing" label="Insert Landing"></ribbon-item>
          <ribbon-item icon="flip" label="Flip Railing"></ribbon-item>
        </div>
      </ribbon-group>`;
  }
}
customElements.define('ribbon-bar', RibbonBar);

class PartsBar extends HTMLElement {
  connectedCallback() {
    const combo = (x, w, l) => [x, w, `<ui-combo w="${w}" label="${l}"></ui-combo>`];
    this.attachShadow({ mode: 'open' }).innerHTML = `
      <style>${BASE}
        :host { display: flex; height: 34px; flex: none; }
        .strip { background: #f0f0f0; height: 33px; box-sizing: border-box; padding-top: 4px; border-radius: 0 3px 3px 0; flex: none; }
        .u { text-decoration: underline; text-decoration-skip-ink: none; }
        .cp { font-size: 13px; letter-spacing: -.3px; }
        .chk { box-sizing: border-box; width: 13px; height: 13px; background: #fff; border: 1px solid #333; }
      </style>
      <div class="strip" style="width:912px">${strip(0, [
        [3,2,grip],[12,13,ic('dropper')],combo(35,94,'Structural - C'),[133,1,sep],combo(137,191,'Insitu Concrete Wall 250mm'),[335,1,sep],
        [339,19,ic('layers')],[365,1,sep],[372,13,'<i class="chk"></i>'],[393,66,'<span class="cp"><span class="u">C</span>ompound</span>'],[470,1,sep],
        [479,17,ic('lineq')],[503,1,sep],combo(508,94,'Part Level'),[606,1,sep],combo(610,94,'Part Color'),[708,1,sep],
        combo(712,94,'Part Style'),[810,1,sep],combo(814,94,'Part Weight')
      ])}</div>
      <div class="strip" style="width:120px;margin-left:3px">${strip(915, [
        [918,2,grip],[923,23,ic('lk1')],[953,21,ic('lk2')],[981,23,ic('lk3')],[1008,24,ic('lk4')]
      ])}</div>`;
  }
}
customElements.define('parts-bar', PartsBar);

class ViewToolbar extends HTMLElement {
  connectedCallback() {
    this.attachShadow({ mode: 'open' }).innerHTML = `
      <style>${BASE}
        :host { display: flex; height: 24px; flex: none; background: #f0f0f0; overflow: hidden; }
        .sep { height: 22px; }
        .strip { height: 24px; }
      </style>
      <div class="strip">${strip(0, [
        [4,19,ic('v_view')],[23,16,trik],[39,23,ic('v_pal')],[62,20,ic('v_sun')],[82,18,trik],[100,22,ic('v_bing')],[122,10,trik],[137,1,sep],
        [143,19,ic('v_brush')],[163,22,ic('v_zin')],[185,22,ic('v_zout')],[207,23,ic('v_wz')],[230,21,ic('v_fit')],[251,22,ic('v_rot')],[273,20,ic('v_pan')],[297,1,sep],
        [301,22,ic('v_feet')],[323,22,ic('v_shoe')],[345,22,ic('v_hist')],[367,22,ic('v_prev')],[389,22,ic('v_next')],[414,1,sep],
        [417,22,ic('v_copy')],[439,22,ic('v_cone')],[461,22,ic('v_clip')],[483,22,ic('v_clip2')]
      ])}</div>`;
  }
}
customElements.define('view-toolbar', ViewToolbar);

class ViewTriad extends HTMLElement {
  connectedCallback() {
    this.attachShadow({ mode: 'open' }).innerHTML = `
      <style>:host { position: absolute; line-height: 0; }</style>${ic(this.getAttribute('kind'))}`;
  }
}
customElements.define('view-triad', ViewTriad);

class ViewWindow extends HTMLElement {
  connectedCallback() {
    const on = this.hasAttribute('active');
    const a = n => this.getAttribute(n);
    const btn = (k, g) => `<i class="b ${k}">${g}</i>`;
    this.attachShadow({ mode: 'open' }).innerHTML = `
      <style>${BASE}
        :host { display: flex; flex-direction: column; box-sizing: border-box; flex: none; width: ${a('w')}px; height: ${a('h')}px;
                background: ${on ? '#b8d2ed' : '#d8e5f3'}; border: 1px solid #3b3b3b; border-top-color: #444;
                box-shadow: inset -1px -1px 0 ${on ? '#2cc5f5' : '#e7f0f9'}; border-radius: 3px 3px 0 0; }
        .bar { display: flex; align-items: center; box-sizing: border-box; height: 30px; flex: none; padding: 6px ${a('pr') || 9}px 0 9px;
               background: linear-gradient(${on ? '#9db5d1, #b9cde2' : '#bccbdb, #d6e3f1'}); }
        .bar span { margin-left: 6px; color: ${on ? '#222' : '#8b8b8b'}; flex: 1; font-size: 13px; letter-spacing: -.1px; }
        .b { display: flex; align-items: center; justify-content: center; box-sizing: border-box; width: 31px; height: 17px; margin-left: 3px;
             border: 1px solid #7d8ea3; border-radius: 2px; background: linear-gradient(rgba(255,255,255,.45), rgba(255,255,255,.1)); }
        .x { background: ${on ? 'linear-gradient(#d9685a, #b63a2d)' : ''}; border-color: ${on ? '#7b2b22' : '#7d8ea3'}; }
        .m { display: block; box-sizing: border-box; width: 11px; height: 5px; background: #fff; border: 1px solid #444; }
        .r { display: block; box-sizing: border-box; width: 10px; height: 9px; border: 1px solid #333; outline: 0; background: radial-gradient(#444 0 1.500px, transparent 2px); }
        .wrap { display: flex; flex-direction: column; flex: 1; min-height: 0; padding: 0 7px 6px 6px; }
        .vp { position: relative; flex: 1; min-height: 0; background: ${a('bg') || '#000'}; }
      </style>
      <div class="bar">${ic('cube')}<span>${a('label')}</span>
        ${btn('', '<i class="m"></i>')}${btn('', '<i class="r"></i>')}
        ${btn('x', `<svg width="12" height="10" viewBox="0 0 12 10"><path d="M2 1l8 8M10 1L2 9" stroke="${on ? '#fff' : '#555'}" stroke-width="2.400"/></svg>`)}
      </div>
      <div class="wrap">
        <view-toolbar></view-toolbar>
        <div class="vp"><slot></slot></div>
      </div>`;
  }
}
customElements.define('view-window', ViewWindow);

class ElementSelection extends HTMLElement {
  connectedCallback() {
    const tb = (items, first) => `<div class="tb"><i class="on">${ic(first)}</i>${items.map(n => `<i>${ic(n)}</i>`).join('')}</div>`;
    this.attachShadow({ mode: 'open' }).innerHTML = `
      <style>${BASE}
        :host { position: absolute; display: block; box-sizing: border-box; width: 282px; height: 125px; background: #efefef; border: 1px solid #3f3f3f; }
        .head { display: flex; align-items: center; height: 29px; background: #fff; padding-left: 7px; color: #8c8c8c; font-size: 12.500px; letter-spacing: -.1px; }
        .head span { margin-left: 5px; flex: 1; }
        .wc { display: flex; width: 45px; justify-content: center; }
        .row { display: flex; align-items: center; margin-left: 12px; height: 25px; }
        .tb { display: flex; box-sizing: border-box; width: 110px; height: 25px; padding: 3px 0 0 3px; border: 1px solid #9a9a9a; border-right-color: #fff; border-bottom-color: #fff; gap: 1px; }
        .tb i { display: flex; align-items: center; justify-content: center; width: 20px; height: 20px; }
        .tb i.on { box-sizing: border-box; background: #6fa9de; border: 1px solid #2f6fc0; }
        .side { margin-left: 25px; line-height: 0; }
        .more { margin-left: auto; margin-right: 13px; align-self: flex-end; margin-bottom: 3px; }
        .more .tri { border-width: 5px; border-top-width: 6px; }
      </style>
      <div class="head">${ic('tool')}<span>Element Selection</span>
        <i class="wc"><svg width="11" height="1"><rect width="11" height="1" fill="#777"/></svg></i>
        <i class="wc" style="margin-left:0"><svg width="10" height="10"><rect x=".5" y=".5" width="9" height="9" fill="none" stroke="#ddd"/></svg></i>
        <i class="wc"><svg width="11" height="11"><path d="M.5.5l10 10M10.500.5l-10 10" stroke="#777"/></svg></i>
      </div>
      <div class="row" style="margin-top:14px">${tb(['es_rect','es_poly','es_circ','es_line'], 'es_ident')}<div class="side">${ic('es_no')}</div></div>
      <div class="row" style="margin-top:17px">${tb(['es_add','es_sub','es_inv','es_all'], 'es_new')}<div class="side">${ic('es_pick')}</div><div class="more">${'<i class="tri k"></i>'}</div></div>`;
  }
}
customElements.define('element-selection', ElementSelection);

class ViewsBar extends HTMLElement {
  connectedCallback() {
    const nums = [1,2,3,4,5,6,7,8].map(n => `<b class="${n < 4 ? 'on' : ''}">${n}</b>`).join('');
    this.attachShadow({ mode: 'open' }).innerHTML = `
      <style>${BASE}
        :host { display: flex; height: 32px; flex: none; }
        .strip { background: #f0f0f0; height: 32px; width: 494px; border-radius: 0 3px 0 0; }
        .sep { height: 26px; }
        .n { display: flex; }
        b { display: block; box-sizing: border-box; width: 18px; height: 23px; font-weight: 400; text-align: center; line-height: 21px; background: #fbfbfb; border: 1px solid #d0d0d0; border-right: 1.500px solid #111; letter-spacing: 0; }
        b:last-child { border-right-color: #ccc; }
        b.on { background: #6fa9de; border: 1px solid #2a62b4; }
      </style>
      <div class="strip">${strip(0, [
        [3,2,grip],[10,24,ic('back')],[38,9,tri],[54,24,ic('fwd')],[81,9,tri],[96,24,ic('sundial')],[125,9,tri],
        [138,168,'<ui-combo w="168" h="24" pad="2" ig="7" icon="dm" label="Design Model" style="letter-spacing:0"></ui-combo>'],[310,1,sep],[315,24,ic('views')],[343,1,sep],
        [347,144,`<span class="n">${nums}</span>`]
      ])}</div>`;
  }
}
customElements.define('views-bar', ViewsBar);

class AttrBar extends HTMLElement {
  connectedCallback() {
    const at = (x, n, on = true) => [x, 27, `<i class="a ${on ? 'on' : ''}">${ic(n)}</i>`];
    const field = (x, w, v) => [x, w, `<span class="f" style="width:${w}px">${v}</span>`];
    const letter = (x, l) => [x, 12, `<span class="xyz">${l}</span>`];
    this.attachShadow({ mode: 'open' }).innerHTML = `
      <style>${BASE}
        :host { display: flex; height: 34px; flex: none; }
        .strip { background: #f0f0f0; height: 33px; box-sizing: border-box; padding-top: 4px; flex: none; }
        .sep { height: 28px; }
        .a { display: flex; align-items: center; justify-content: center; box-sizing: border-box; width: 27px; height: 27px; border: 1px solid transparent; }
        .a.on { background: #6fa9de; border-color: #2f6fc0; }
        .f { box-sizing: border-box; display: block; height: 21px; line-height: 19px; padding-left: 5px; background: #fff; border: 1px solid #a8a8a8; color: #666; font-size: 12.500px; }
        .ang { background: #f0f2f6; border: 2px solid #bcd0e6; color: #7a7a7a; line-height: 17px; }
        .dd { display: flex; align-items: center; justify-content: center; width: 17px; height: 21px; background: #d8d8d8; }
        .xyz { font-family: "Liberation Sans", sans-serif; font-weight: 700; font-size: 17px; color: #111; letter-spacing: 0; }
      </style>
      <div class="strip" style="width:1006px;border-radius:0 3px 3px 0">${strip(0, [
        at(8,'at1'),at(37,'at2'),at(65,'at3'),at(93,'at4'),at(121,'at5',false),[153,2,grip],[164,22,ic('stack')],[191,1,sep],
        [196,507,'<ui-combo w="507" h="21" pad="3" ig="11" icon="level" label="None"></ui-combo>'],
        [706,80,'<span class="f ang" style="width:80px">0.00°</span>'],
        [788,17,`<i class="dd"><svg width="9" height="6" viewBox="0 0 9 6"><path d="M1 1l3.500 4L8 1" fill="none" stroke="#999"/></svg></i>`],
        [810,22,ic('sn1')],[838,22,ic('sn2')],[866,9,tri],[880,1,sep],[886,24,ic('grid')],[915,1,sep],[920,24,ic('gridc')],[950,9,trik],
        [964,24,ic('grids')],[992,9,trik]
      ])}</div>
      <div class="strip" style="width:447px;margin-left:3px;border-radius:3px">${strip(1009, [
        [1012,2,grip],letter(1019,'X'),field(1037,119,'58763.9'),[1160,1,sep],letter(1168,'Y'),field(1186,119,'22521.2'),[1310,1,sep],letter(1317,'Z'),field(1335,118,'19860.2')
      ])}</div>`;
  }
}
customElements.define('attr-bar', AttrBar);

class StatusBar extends HTMLElement {
  connectedCallback() {
    const lite = [1485,1518,1553,1586,1621,1655,1688,1723,1757];
    const icons = { 1553: ['scroll', 1562, 16], 1586: ['tool', 1597, 17], 1655: ['note', 1665, 14], 1723: ['doc3', 1734, 13], 1757: ['globe', 1766, 17] };
    let row = [];
    lite.forEach(x => {
      row.push([x, 1, '<i class="sep lite"></i>']);
      if (icons[x]) row.push([icons[x][1], icons[x][2], ic(icons[x][0])]);
    });
    this.attachShadow({ mode: 'open' }).innerHTML = `
      <style>${BASE}
        :host { display: flex; height: 33px; flex: none; background: #f0f0f0; align-items: center; font-size: 13px; letter-spacing: -.16px; }
        .strip { height: 33px; box-sizing: border-box; padding-top: 2px; }
        .sep { height: 27px; background: #555; }
        .sep.lite { background: #e2e2e2; }
        .grip { height: 24px; }
      </style>
      <div class="strip">${strip(0, [
        [3,300,'<span style="width:100%">Element Selection &gt; Identify element to add to set</span>'],
        [331,2,grip],[335,1,'<i class="sep" style="background:#ccc"></i>'],[344,16,ic('infob')],[361,6,'<i class="tri k" style="transform:rotate(180deg);margin-bottom:14px;border-width:3px"></i>'],
        [367,1,'<i class="sep"></i>'],[370,125,'<span style="width:100%">Legacy mode is Off</span>'],
        [1099,1,'<i class="sep"></i>'],[1102,31,ic('box')],[1144,13,ic('lock')],[1167,1,'<i class="sep lite"></i>'],
        [1171,145,'<span style="width:100%;overflow:hidden">S-WALL-CONC (Walls: ca</span>'],[1316,1,'<i class="sep"></i>'],[1449,1,'<i class="sep"></i>'],
        ...row
      ])}</div>`;
  }
}
customElements.define('status-bar', StatusBar);

class AppShell extends HTMLElement {
  connectedCallback() {
    this.attachShadow({ mode: 'open' }).innerHTML = `
      <style>
        :host { display: flex; flex-direction: column; width: 1794px; height: 1022px; background: #d4d4d4; }
        .mdi { position: relative; display: flex; height: 745px; flex: none; align-items: flex-start; }
        .right { display: flex; flex-direction: column; flex: none; margin-top: 2px; }
      </style>
      <app-titlebar></app-titlebar>
      <ribbon-tabs></ribbon-tabs>
      <ribbon-bar></ribbon-bar>
      <parts-bar></parts-bar>
      <div class="mdi">
        <view-window active w="1216" h="738" pr="8" bg="#e0e0e0" label="View 1 - Isometric, Design Model" style="margin-top:1px;box-shadow:inset -1px -1px 0 #2cc5f5, 0 6px 0 #a8a8a8">
          <view-triad kind="tr_iso" style="left:69px;top:614px"></view-triad>
        </view-window>
        <div class="right">
          <view-window w="578" h="373" pr="10" label="View 2 - Top, Design Model">
            <view-triad kind="tr_top" style="left:39px;top:195px"></view-triad>
          </view-window>
          <view-window w="576" h="368" pr="12" label="View 3 - Front, Design Model">
            <view-triad kind="tr_front" style="left:39px;top:212px"></view-triad>
          </view-window>
        </div>
        <element-selection style="left:1335px;top:152px"></element-selection>
      </div>
      <views-bar></views-bar>
      <attr-bar></attr-bar>
      <status-bar></status-bar>`;
  }
}
customElements.define('app-shell', AppShell);
</script>
</body>
</html>
